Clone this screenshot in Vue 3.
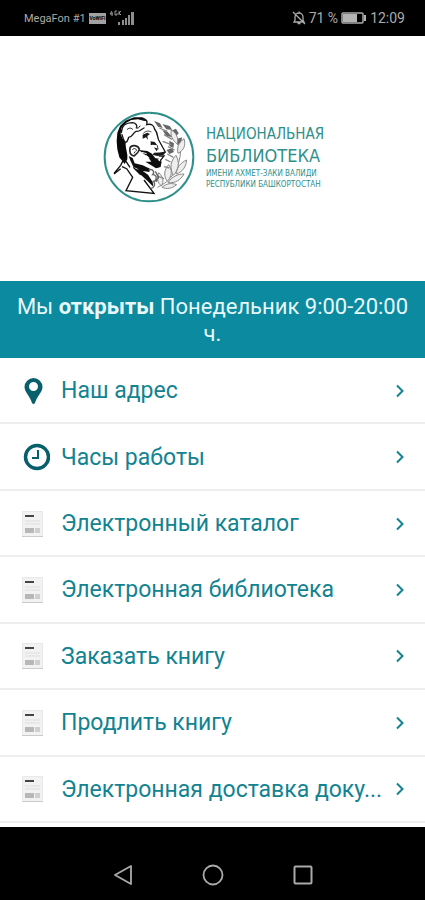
<script setup>
import { ref } from 'vue'

// Пункты главного меню
const menuItems = ref([
  { title: 'Наш адрес', icon: 'pin' },
  { title: 'Часы работы', icon: 'clock' },
  { title: 'Электронный каталог', icon: 'page' },
  { title: 'Электронная библиотека', icon: 'page' },
  { title: 'Заказать книгу', icon: 'page' },
  { title: 'Продлить книгу', icon: 'page' },
  { title: 'Электронная доставка доку...', icon: 'page' }
])
</script>

<template>
  <div class="app">
    <!-- Строка состояния -->
    <header class="status-bar">
      <div class="status-group">
        <span class="carrier">MegaFon #1</span>
        <span class="vowifi">VoWiFi</span>
        <svg class="signal" viewBox="0 0 26 16" width="26" height="16">
          <path d="M3 1L1 4h3M3 2v4M8 1H6v4h2V3M10 1v4M12 1l-2 2 2 2" fill="none" stroke="#999" stroke-width="1" />
          <path d="M9 12h2v3H9zM13 10h2v5h-2zM16 8h2v7h-2zM19 5h2v10h-2zM22 2h3v13h-3z" fill="#8e8e8e" />
        </svg>
      </div>
      <div class="status-group status-right">
        <svg viewBox="0 0 14 14" width="14" height="14">
          <path d="M2 11h10l-1-2V6a4 4 0 0 0-8 0v3zM5.500 12.500h3M7 2V.5M1 1l12 12" fill="none" stroke="#aaa" stroke-width="1.300" />
        </svg>
        <span>71 %</span>
        <svg class="battery" viewBox="0 0 26 12" width="26" height="12">
          <rect x="1" y="1" width="21" height="10" rx="1" fill="none" stroke="#aaa" stroke-width="1.500" />
          <path d="M2 2h14v8H2zM23 3h2v6h-2z" fill="#b4b4b4" />
        </svg>
        <span>12:09</span>
      </div>
    </header>

    <!-- Логотип библиотеки -->
    <section class="hero">
      <svg class="emblem" viewBox="27 33 276 276" width="92" height="92">
        <circle cx="165" cy="171" r="133" fill="#fff" stroke="#2f8f8a" stroke-width="6" />
        <!-- Лавровая ветвь -->
        <path d="M180 62l18 8 8 14-14-4zM205 72l22 6 8 12-18-2zM205 90l16 6 14 16-18-4zM232 92l14-6 8 14-10 12zM246 118l18-6-2 18-12 6zM226 122l14 8-2 14-12-6zM218 150l16-6 6 12-14 6z" fill="#666" />
        <g fill="#eee" stroke="#888" stroke-width="3">
          <path d="M190 262c40-16 68-58 70-112" fill="none" />
          <path d="M238 226c-12-22-8-44 8-60 12 22 8 44-8 60zM246 222c20-6 30-22 32-42-18 8-30 22-32 42zM220 244c-12-16-10-34 4-50 12 18 10 34-4 50zM222 248c22 2 38-8 48-26-20 0-36 8-48 26zM202 258c-12-10-14-24-8-40 14 12 16 26 8 40zM204 262c14 6 30 4 44-8-16-6-30-4-44 8z" />
          <path d="M252 160c-4-18 2-32 18-44 6 20 0 34-18 44zM250 132c-14-10-22-26-18-42 16 10 22 24 18 42z" />
        </g>
        <path d="M196 84l24 10M210 104l24 14M206 124l26 10M222 140l20 10M220 162l18 10M214 178l16 8M210 200l16 4M190 228l20 8" fill="none" stroke="#888" stroke-width="4" />
        <!-- Профиль -->
        <path d="M74 100l14-30 32-17 38 3 28 22 8 34 22 43-8 6-2 26-12 15-40 10 26 70-86-8 20-38-28-28 24-38z" fill="#fff" />
        <path d="M70 98l8-20 16-16 26-10 26 0 16 12-14-2-16-4-20 2-16 10-14 14-2 18 6 14 8 8 2 20 4 20 0 14-8 14-16-20-6-24-2-24z" fill="#080808" />
        <path d="M94 70l16-8 8 2-14 8z" fill="#fff" />
        <g fill="none" stroke="#181818" stroke-width="4" stroke-linecap="round">
          <path d="M82 98c0-20 14-30 34-30 10 2 14 8 12 14M84 104c4 10 4 18 10 24 8-4 8-10 10-16 12 0 12-14 22-18 12 2 14-6 24-10M140 58c16-4 22 6 18 16 14-4 22 2 24 14" />
          <path d="M100 88c6-6 12-4 16 0M138 78c-2 6-8 8-12 6" stroke-width="3" />
          <path d="M182 88c10 10 8 24 12 32l20 36-14 4M196 168l14 0-8 10M200 180c2 12-4 18-12 22" />
        </g>
        <path d="M146 104l14-6 8 4-8 6 2 12-6-8-10 4zM170 124l12 2 8 10-14-2-6 2zM180 142l12 4-4 8zM180 158l34-1-4 7-20 4-14-4zM178 174l18 2-10 6z" fill="#181818" />
        <path d="M148 100c8-8 16-8 24-4M190 136l2 12" fill="none" stroke="#333" stroke-width="3" />
        <path d="M108 144c4-10 24-10 28 4-2 10-10 14-16 20-10-2-14-12-12-24z" fill="#fff" stroke="#222" stroke-width="5" />
        <path d="M115 149c4-6 14-3 12 4M120 160l4-6" fill="none" stroke="#222" stroke-width="3" />
        <path d="M134 150l26 3 14 8 10 14 18 12-2 14-14 4-12-8-20-12 18 0-10-14-16-12zM104 168l12 6 6 16 24 6 22 10-2 10-24-4-24-12-8-16zM120 206l22 4 20 14 14 22 2 14-18-18z" fill="#0e0e0e" />
        <path d="M144 157l14 4M156 166l10 8" stroke="#eee" stroke-width="3" />
        <path d="M90 176L80 196l-20 24M92 178l16 24M84 200l14 6 18 26-20 40 84 8-30-40M60 222l20-16M118 202l22 22" fill="none" stroke="#111" stroke-width="4" />
        <path d="M164 210c14-6 18 8 12 14 14 0 14 18 2 20 8 8 2 20-8 22M184 214l10 18-8 14" fill="none" stroke="#666" stroke-width="4" />
      </svg>
      <div class="brand">
        <span class="brand-top">НАЦИОНАЛЬНАЯ</span>
        <span class="brand-main">БИБЛИОТЕКА</span>
        <span class="brand-small">ИМЕНИ АХМЕТ-ЗАКИ ВАЛИДИ</span>
        <span class="brand-small">РЕСПУБЛИКИ БАШКОРТОСТАН</span>
      </div>
    </section>

    <div class="hours">Мы <strong>открыты</strong> Понедельник 9:00-20:00 ч.</div>

    <!-- Меню -->
    <nav class="menu">
      <a v-for="item in menuItems" :key="item.title" href="#" class="menu-item" @click.prevent>
        <span class="menu-icon">
          <svg v-if="item.icon === 'pin'" viewBox="0 0 22 28" width="22" height="28">
            <path d="M11.500 1A9 9 0 0 0 2.500 10C2.500 15 8 19 10 26q1.500 2 3 0C15 19 20.500 15 20.500 10A9 9 0 0 0 11.500 1zm0 4a4.500 4.500 0 1 1 0 9 4.500 4.500 0 0 1 0-9z" fill="#075f6b" fill-rule="evenodd" />
          </svg>
          <svg v-else-if="item.icon === 'clock'" viewBox="0 0 28 28" width="28" height="28">
            <circle cx="15" cy="14" r="11.500" fill="none" stroke="#075f6b" stroke-width="3.500" />
            <path d="M16 7v8h-6" fill="none" stroke="#075f6b" stroke-width="2" />
          </svg>
          <svg v-else viewBox="0 0 22 28" width="22" height="28">
            <rect x="0.500" y="1.500" width="20" height="25" fill="#f2f2f2" stroke="#e9e9e9" />
            <path d="M0 26.500h21" stroke="#cbcbcb" />
            <path d="M3 5h9v2H3z" fill="#444" />
            <path d="M3 11h15M3 14h15" stroke="#ddd" />
            <path d="M3 18h9v5H3z" fill="#b7b7b7" />
            <path d="M13 18h5v5h-5z" fill="#cfcfcf" />
          </svg>
        </span>
        <span class="menu-title">{{ item.title }}</span>
        <svg class="chevron" viewBox="0 0 10 14" width="10" height="14">
          <path d="M2 1.500L7.500 7 2 12.500" fill="none" stroke="#128391" stroke-width="2" />
        </svg>
      </a>
    </nav>

    <!-- Системные кнопки -->
    <footer class="system-bar">
      <button type="button" class="system-btn" aria-label="Назад">
        <svg viewBox="0 0 22 22" width="22" height="22">
          <path d="M19 2v18L3 11z" fill="none" stroke="#aaa" stroke-width="1.800" stroke-linejoin="round" />
        </svg>
      </button>
      <button type="button" class="system-btn" aria-label="Домой">
        <svg viewBox="0 0 22 22" width="22" height="22">
          <circle cx="11" cy="11" r="9.500" fill="none" stroke="#aaa" stroke-width="1.800" />
        </svg>
      </button>
      <button type="button" class="system-btn" aria-label="Недавние">
        <svg viewBox="0 0 22 22" width="22" height="22">
          <rect x="2.500" y="2.500" width="17" height="17" rx="1" fill="none" stroke="#aaa" stroke-width="2" />
        </svg>
      </button>
    </footer>
  </div>
</template>

<style>
body {
  margin: 0;
}
</style>

<style scoped>
.app {
  min-height: 100vh;
  display: flex;
  flex-direction: column;
  background: #fff;
  font-family: Roboto, "Noto Sans", sans-serif;
}

/* Строка состояния */
.status-bar {
  height: 36px;
  padding: 0 20px 0 24px;
  display: flex;
  align-items: center;
  justify-content: space-between;
  background: #000;
  color: #aaa;
  box-sizing: border-box;
}

.status-group {
  display: flex;
  align-items: center;
  gap: 3px;
}

.carrier {
  font-size: 11px;
}

.vowifi {
  padding: 0 1px;
  background: #a2a2a2;
  color: #000;
  font-size: 5px;
  font-weight: bold;
  line-height: 11px;
}

.status-right {
  font-size: 14px;
}

/* Логотип */
.hero {
  height: 245px;
  padding: 75px 0 0 2px;
  display: flex;
  justify-content: center;
  gap: 11px;
  box-sizing: border-box;
}

.brand {
  display: flex;
  flex-direction: column;
  padding-top: 13px;
  color: #2f8f8a;
  font-family: "DejaVu Sans Condensed", "DejaVu Sans", sans-serif;
  white-space: nowrap;
}

.brand-top {
  font-size: 15px;
  line-height: 20px;
}

.brand-main {
  font-size: 18px;
  line-height: 24px;
}

.brand-small {
  font-size: 8px;
  line-height: 11px;
}

/* Режим работы */
.hours {
  padding: 12px 12px 11px;
  background: #0b8aa0;
  color: #e8f7f9;
  font-size: 22px;
  line-height: 27px;
  text-align: center;
}

/* Меню */
.menu {
  flex: 1;
  display: flex;
  flex-direction: column;
  padding-bottom: 4px;
}

.menu-item {
  flex: 1;
  min-height: 56px;
  padding: 1px 20px 0 22px;
  display: flex;
  align-items: center;
  border-bottom: 2px solid #eee;
  box-sizing: border-box;
  color: #128391;
  font-size: 23px;
  text-decoration: none;
}

.menu-icon {
  width: 39px;
  flex-shrink: 0;
  display: flex;
}

.menu-title {
  flex: 1;
  min-width: 0;
  overflow: hidden;
  text-overflow: ellipsis;
  white-space: nowrap;
}

.chevron {
  margin-left: 8px;
  flex-shrink: 0;
}

/* Системные кнопки */
.system-bar {
  height: 73px;
  padding-top: 24px;
  display: flex;
  justify-content: center;
  gap: 68px;
  background: #000;
  box-sizing: border-box;
}

.system-btn {
  width: 22px;
  height: 48px;
  padding: 0;
  display: flex;
  align-items: center;
  border: none;
  background: none;
  cursor: pointer;
}
</style>
